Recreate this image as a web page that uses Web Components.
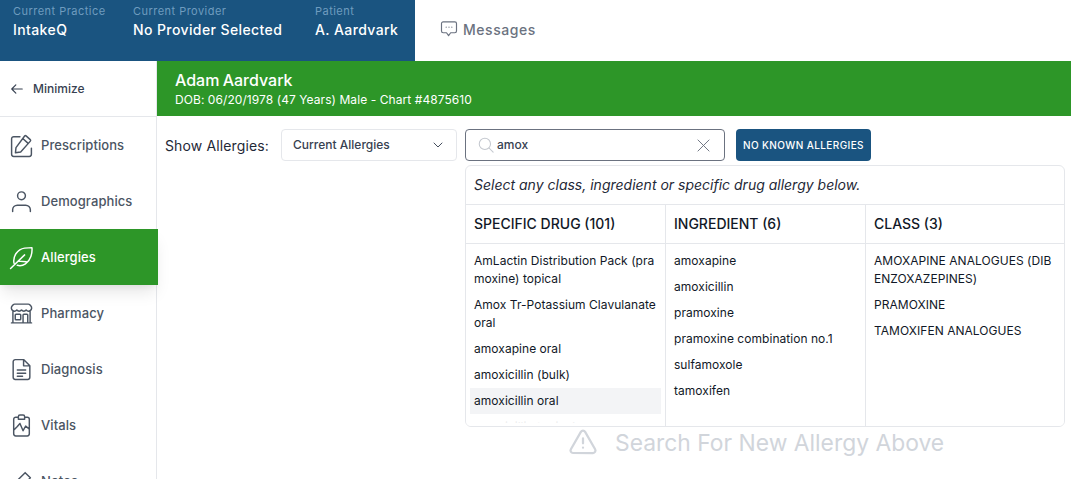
<!DOCTYPE html>
<html>
<head>
<meta charset="utf-8">
<style>
html, body { margin: 0; height: 100%; overflow: hidden; background: #fff; }
body { font-family: Inter, "Liberation Sans", sans-serif; color: #111827; }
</style>
</head>
<body>
<app-page></app-page>
<script>
const ICONS = {
    back: '<path d="M10 19l-7-7m0 0l7-7m-7 7h18"/>',
    chat: '<path d="M8.600 9.800h.01M12 9.800h.01M15.400 9.800h.01M9 16.500H5a2 2 0 01-2-2V5.500a2 2 0 012-2h14a2 2 0 012 2v9a2 2 0 01-2 2h-5l-2.500 3.500z"/>',
    edit: '<path d="M16.400 2.800l4 3.600a1 1 0 01.1 1.400l-9.300 10.400-5 .8.500-5L15 2.900a1 1 0 011.400-.1zM13.500 5.500l4.600 4.200M10.500 3.500H4.500a2 2 0 00-2 2v15a2 2 0 002 2h15a2 2 0 002-2v-6"/>',
    user: '<path d="M15.750 6.500a3.750 3.750 0 11-7.500 0 3.750 3.750 0 017.500 0zM3.500 21.500v-1.500a4.500 4.500 0 014.500-4.500h8a4.500 4.500 0 014.500 4.500v1.500"/>',
    feather: '<path d="M1.500 22.500L15 9.500M4.800 17.500C3.500 11 8 4 15 3c2.500-.3 5-.5 7-.5.3 2.500 0 5.500-1 8.500-2 6-7.500 10-13 8.500M8.500 15.500l8 .5"/>',
    store: '<path d="M13.500 21v-7.500a.75.75 0 01.75-.75h3a.75.75 0 01.75.75V21m-4.500 0H2.360m11.140 0H18m0 0h3.640m-1.390 0V9.349m-16.500 11.650V9.350m0 0a3.001 3.001 0 003.750-.615A2.993 2.993 0 009.750 9.750c.896 0 1.700-.393 2.250-1.016a2.993 2.993 0 002.250 1.016c.896 0 1.700-.393 2.250-1.016a3.001 3.001 0 003.750.614m-16.500 0a3.004 3.004 0 01-.621-4.720L4.318 3.440A1.500 1.500 0 015.378 3h13.243a1.500 1.500 0 011.060.44l1.190 1.189a3 3 0 01-.621 4.720m-13.500 8.650h3.750a.75.75 0 00.75-.75V13.500a.75.75 0 00-.75-.75H6.750a.75.75 0 00-.75.75v3.750c0 .415.336.75.75.75z"/>',
    doc: '<path d="M14 2.500H6A2 2 0 004 4.500v15a2 2 0 002 2h12a2 2 0 002-2V8.500zM14 2.500v6h6M8 12.500h8M8 15.500h8M8 18.500h5"/>',
    vitals: '<path d="M9 4H6.500a2 2 0 00-2 2v14a2 2 0 002 2h11a2 2 0 002-2V6a2 2 0 00-2-2H15M9 3.500A1.500 1.500 0 0110.500 2h3A1.500 1.500 0 0115 3.500V6H9zM4.500 16.500L8 13l2.500-3 3 7 2.500-4.500 3.500 3"/>',
    notes: '<path d="M15.500 3.500l5 5L9 20H4v-5z"/>',
    chevron: '<path d="M6 9l6 6 6-6"/>',
    search: '<circle cx="10.500" cy="10.500" r="7.500"/><path d="M16 16l5.500 5.500"/>',
    close: '<path d="M5 5l14 14M19 5L5 19"/>',
    warn: '<path d="M12 9v4m0 3.500h.01M10.300 3.900L2.300 17.800A2 2 0 004 20.800h16a2 2 0 001.700-3L13.700 3.900a2 2 0 00-3.400 0z"/>'
};

function icon(name, size, sw) {
    return `<svg width="${size}" height="${size}" viewBox="0 0 24 24" fill="none" stroke="currentColor" stroke-width="${sw || 1.5}" stroke-linecap="round" stroke-linejoin="round">${ICONS[name]}</svg>`;
}

class TopBar extends HTMLElement {
    connectedCallback() {
        const ctx = [['Current Practice', 'IntakeQ', 120], ['Current Provider', 'No Provider Selected', 182], ['Patient', 'A. Aardvark', 100]];
        this.attachShadow({ mode: 'open' }).innerHTML = `
        <style>
            :host { display: flex; height: 61px; background: #fff; }
            .ctx { display: flex; width: 415px; box-sizing: border-box; padding: 4px 0 0 13px; background: #1a5480; }
            .item { display: flex; flex-direction: column; }
            .label { font-size: 11px; line-height: 14px; letter-spacing: .47px; color: #6f9cbf; }
            .value { margin-top: 3px; font-size: 14px; line-height: 18px; font-weight: 500; letter-spacing: .4px; color: #fff; }
            .msg { display: flex; align-items: center; gap: 4px; height: 58px; padding-left: 24px; font-size: 14px; font-weight: 500; letter-spacing: .55px; color: #6b7280; }
        </style>
        <div class="ctx">
            ${ctx.map(c => `<div class="item" style="width:${c[2]}px"><span class="label">${c[0]}</span><span class="value">${c[1]}</span></div>`).join('')}
        </div>
        <div class="msg">${icon('chat', 20, 1.4)}<span>Messages</span></div>`;
    }
}

class SideNav extends HTMLElement {
    connectedCallback() {
        const items = [['edit', 'Prescriptions'], ['user', 'Demographics'], ['feather', 'Allergies', 1], ['store', 'Pharmacy'], ['doc', 'Diagnosis'], ['vitals', 'Vitals'], ['notes', 'Notes']];
        this.attachShadow({ mode: 'open' }).innerHTML = `
        <style>
            :host { display: block; width: 157px; flex: none; box-sizing: border-box; border-right: 1px solid #e5e7eb; }
            .min { display: flex; align-items: center; gap: 9px; height: 55px; padding-left: 10px; border-bottom: 1px solid #e5e7eb; font-size: 12px; font-weight: 500; color: #374151; }
            .item { display: flex; align-items: center; gap: 7px; height: 56px; padding-left: 9px; font-size: 13px; font-weight: 500; letter-spacing: .08px; color: #4b5563; }
            .item.on { position: relative; width: 158px; box-sizing: border-box; background: #2d9628; color: #fff; box-shadow: 0 10px 15px -3px rgba(0,0,0,.1), 0 4px 6px -2px rgba(0,0,0,.05); }
        </style>
        <div class="min">${icon('back', 14, 2)}<span>Minimize</span></div>
        ${items.map(i => `<div class="item${i[2] ? ' on' : ''}">${icon(i[0], 25, 1.4)}<span>${i[1]}</span></div>`).join('')}`;
    }
}

class PatientBanner extends HTMLElement {
    connectedCallback() {
        this.attachShadow({ mode: 'open' }).innerHTML = `
        <style>
            :host { display: block; height: 55px; box-sizing: border-box; padding: 9px 18px 0; background: #2d9628; color: #fff; }
            .name { font-size: 16px; line-height: 20px; font-weight: 500; word-spacing: -1px; }
            .sub { font-size: 12px; line-height: 19px; letter-spacing: .07px; }
        </style>
        <div class="name"><slot name="name"></slot></div>
        <div class="sub"><slot name="sub"></slot></div>`;
    }
}

class AllergyToolbar extends HTMLElement {
    connectedCallback() {
        this.attachShadow({ mode: 'open' }).innerHTML = `
        <style>
            :host { display: flex; align-items: center; height: 32px; font-size: 13px; }
            .lbl { width: 116px; font-size: 14px; letter-spacing: .13px; color: #1f2937; }
            .sel, .search { display: flex; align-items: center; height: 32px; box-sizing: border-box; padding-bottom: 1px; border-radius: 4px; font-size: 12px; font-weight: 500; color: #374151; }
            .sel { justify-content: space-between; width: 176px; padding-left: 11px; padding-right: 10px; border: 1px solid #e5e7eb; }
            .sel svg { margin-top: 1px; }
            .search { gap: 2px; width: 260px; margin-left: 8px; padding-left: 11px; padding-right: 11px; border: 1px solid #6b7280; }
            .search span { flex: 1; }
            .search i { display: flex; margin-top: 1px; }
            .search .s { color: #c4c8cf; }
            .search .x { color: #6b7280; }
            .btn { display: flex; align-items: center; justify-content: center; width: 135px; height: 32px; margin-left: 11px; border-radius: 4px; background: #1a5480; color: #fff; font-size: 10px; font-weight: 500; letter-spacing: .4px; }
        </style>
        <span class="lbl">Show Allergies:</span>
        <div class="sel"><span>Current Allergies</span>${icon('chevron', 16, 1.4)}</div>
        <div class="search"><i class="s">${icon('search', 18, 1.4)}</i><span>amox</span><i class="x">${icon('close', 19, 1.2)}</i></div>
        <div class="btn">NO KNOWN ALLERGIES</div>`;
    }
}

class AllergyColumn extends HTMLElement {
    connectedCallback() {
        this.attachShadow({ mode: 'open' }).innerHTML = `
        <style>
            :host { display: block; flex: 0 0 200px; min-width: 0; box-sizing: border-box; border-right: 1px solid #e5e7eb; }
            :host(:last-child) { flex: 1 1 0; border-right: 0; }
            .head { height: 39px; box-sizing: border-box; padding-left: 8px; border-bottom: 1px solid #e5e7eb; font-size: 14px; line-height: 38px; font-weight: 500; color: #111827; }
            .list { position: relative; height: 182px; overflow: hidden; padding: 4px 4px 0; }
            .list::after { content: ""; position: absolute; left: 0; right: 0; bottom: 0; height: 13px; background: linear-gradient(rgba(255,255,255,.5), #fff 50%); }
        </style>
        <div class="head">${this.getAttribute('heading')}</div>
        <div class="list"><slot></slot></div>`;
    }
}

class AllergyOption extends HTMLElement {
    connectedCallback() {
        this.attachShadow({ mode: 'open' }).innerHTML = `
        <style>
            :host { display: block; padding: 4px; font-size: 12px; line-height: 18px; letter-spacing: .04px; color: #111827; word-break: break-all; }
            :host([active]) { background: #f3f4f6; }
        </style>
        <slot></slot>`;
    }
}

class AllergyPanel extends HTMLElement {
    connectedCallback() {
        this.attachShadow({ mode: 'open' }).innerHTML = `
        <style>
            :host { display: block; position: absolute; left: 308px; top: 104px; width: 600px; height: 262px; box-sizing: border-box; border: 1px solid #e5e7eb; border-radius: 6px; background: #fff; overflow: hidden; }
            .hint { height: 39px; box-sizing: border-box; padding-left: 8px; border-bottom: 1px solid #e5e7eb; font-size: 14px; line-height: 38px; font-style: italic; color: #1f2937; }
            .cols { display: flex; }
        </style>
        <div class="hint">Select any class, ingredient or specific drug allergy below.</div>
        <div class="cols"><slot></slot></div>`;
    }
}

class EmptyNote extends HTMLElement {
    connectedCallback() {
        this.attachShadow({ mode: 'open' }).innerHTML = `
        <style>
            :host { display: flex; align-items: center; gap: 17px; color: #d1d5db; font-size: 22.85px; line-height: 30px; }
            svg { flex: none; margin-top: -2px; }
        </style>
        ${icon('warn', 30, 1.8)}<span><slot></slot></span>`;
    }
}

class AppPage extends HTMLElement {
    connectedCallback() {
        this.attachShadow({ mode: 'open' }).innerHTML = `
        <style>
            :host { display: flex; flex-direction: column; height: 479px; overflow: hidden; }
            .body { display: flex; flex: 1; min-height: 0; }
            main { position: relative; flex: 1; min-width: 0; }
            .content { padding: 13px 8px 0; }
            empty-note { margin: 267px 0 0 403px; }
        </style>
        <top-bar></top-bar>
        <div class="body">
            <side-nav></side-nav>
            <main>
                <patient-banner>
                    <span slot="name">Adam Aardvark</span>
                    <span slot="sub">DOB: 06/20/1978 (47 Years) Male - Chart #4875610</span>
                </patient-banner>
                <div class="content">
                    <allergy-toolbar></allergy-toolbar>
                    <empty-note>Search For New Allergy Above</empty-note>
                </div>
                <allergy-panel>
                    <allergy-column heading="SPECIFIC DRUG (101)">
                        <allergy-option>AmLactin Distribution Pack (pramoxine) topical</allergy-option>
                        <allergy-option>Amox Tr-Potassium Clavulanate oral</allergy-option>
                        <allergy-option>amoxapine oral</allergy-option>
                        <allergy-option>amoxicillin (bulk)</allergy-option>
                        <allergy-option active>amoxicillin oral</allergy-option>
                        <allergy-option>amoxicillin topical</allergy-option>
                    </allergy-column>
                    <allergy-column heading="INGREDIENT (6)">
                        <allergy-option>amoxapine</allergy-option>
                        <allergy-option>amoxicillin</allergy-option>
                        <allergy-option>pramoxine</allergy-option>
                        <allergy-option>pramoxine combination no.1</allergy-option>
                        <allergy-option>sulfamoxole</allergy-option>
                        <allergy-option>tamoxifen</allergy-option>
                    </allergy-column>
                    <allergy-column heading="CLASS (3)">
                        <allergy-option>AMOXAPINE ANALOGUES (DIBENZOXAZEPINES)</allergy-option>
                        <allergy-option>PRAMOXINE</allergy-option>
                        <allergy-option>TAMOXIFEN ANALOGUES</allergy-option>
                    </allergy-column>
                </allergy-panel>
            </main>
        </div>`;
    }
}

customElements.define('top-bar', TopBar);
customElements.define('side-nav', SideNav);
customElements.define('patient-banner', PatientBanner);
customElements.define('allergy-toolbar', AllergyToolbar);
customElements.define('allergy-column', AllergyColumn);
customElements.define('allergy-option', AllergyOption);
customElements.define('allergy-panel', AllergyPanel);
customElements.define('empty-note', EmptyNote);
customElements.define('app-page', AppPage);
</script>
</body>
</html>
